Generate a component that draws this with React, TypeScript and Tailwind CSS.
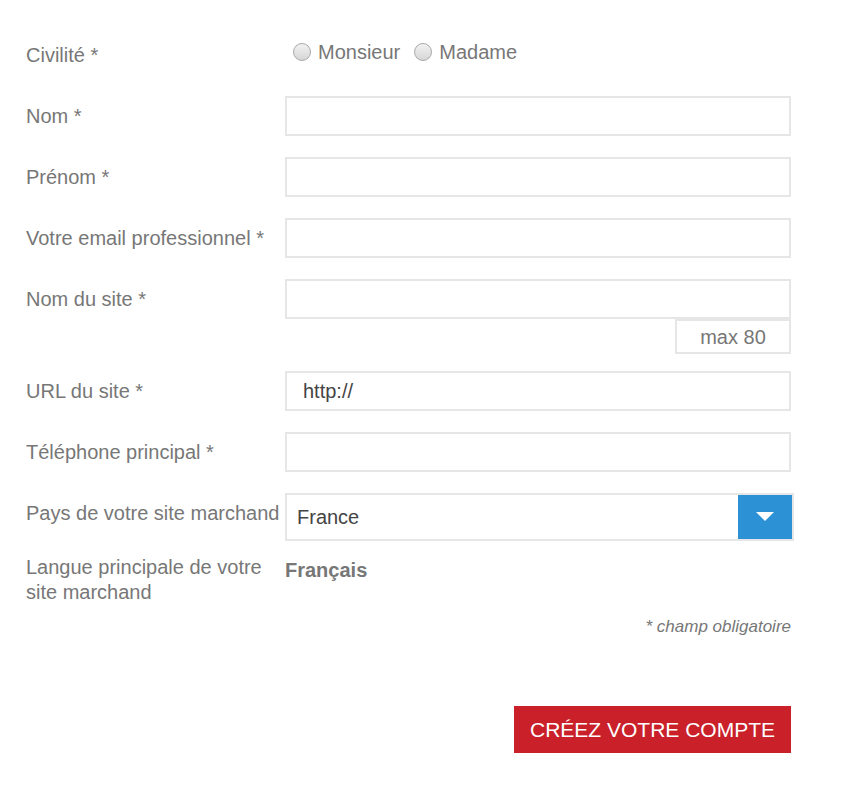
import React from "react";

const Label = ({ children, nowrap }: { children: React.ReactNode; nowrap?: boolean }) => (
  <div className={`w-[259px] shrink-0 h-[40px] flex items-center text-[20px] text-[#777777] ${nowrap ? "whitespace-nowrap" : ""}`}>
    {children}
  </div>
);

const Input = ({ value }: { value?: string }) => (
  <div className="w-[506px] h-[40px] border-2 border-[#e6e6e6] bg-white flex items-center pl-[16px] text-[20px] text-[#444444]">
    {value}
  </div>
);

const Radio = ({ label }: { label: string }) => (
  <div className="flex items-center">
    <span className="w-[18px] h-[18px] rounded-full border border-[#a9a9a9] bg-gradient-to-b from-[#f2f2f2] to-[#d6d6d6] mr-[7px]" />
    <span className="text-[20px] text-[#777777]">{label}</span>
  </div>
);

export default function App() {
  return (
    <div className="w-[842px] h-[797px] bg-white pl-[26px] pt-[35px]" style={{ fontFamily: '"Liberation Sans", Arial, sans-serif' }}>
      <div className="flex mb-[21px]">
        <Label>Civilité *</Label>
        <div className="flex items-start gap-[14px] pl-[8px] pt-[2px]">
          <Radio label="Monsieur" />
          <Radio label="Madame" />
        </div>
      </div>

      <div className="flex mb-[21px]">
        <Label>Nom *</Label>
        <Input />
      </div>
      <div className="flex mb-[21px]">
        <Label>Prénom *</Label>
        <Input />
      </div>
      <div className="flex mb-[21px]">
        <Label>Votre email professionnel *</Label>
        <Input />
      </div>
      <div className="flex mb-[17px]">
        <Label>Nom du site *</Label>
        <div className="flex flex-col w-[506px]">
          <Input />
          <div className="self-end w-[116px] h-[35px] border-2 border-[#e6e6e6] flex items-center justify-center text-[20px] text-[#777777]">
            max 80
          </div>
        </div>
      </div>
      <div className="flex mb-[21px]">
        <Label>URL du site *</Label>
        <Input value="http://" />
      </div>
      <div className="flex mb-[21px]">
        <Label>Téléphone principal *</Label>
        <Input />
      </div>
      <div className="flex mb-[13px]">
        <Label nowrap>Pays de votre site marchand</Label>
        <div className="w-[509px] h-[48px] border-2 border-[#e6e6e6] flex items-stretch bg-white">
          <div className="flex-1 flex items-center pl-[10px] text-[20px] text-[#444444]">France</div>
          <div className="w-[54px] bg-[#2d91d6] flex items-center justify-center">
            <svg width="18" height="10" viewBox="0 0 18 10">
              <polygon points="0,0 18,0 9,9" fill="#ffffff" />
            </svg>
          </div>
        </div>
      </div>
      <div className="flex mb-[12px]">
        <div className="w-[259px] shrink-0 text-[20px] leading-[25px] text-[#777777] pt-[1px]">
          Langue principale de votre site marchand
        </div>
        <div className="text-[20px] leading-[25px] font-bold text-[#777777] pt-[4px]">Français</div>
      </div>
      <div className="w-[765px] text-right text-[17px] leading-[20px] italic text-[#777777]">* champ obligatoire</div>

      <div className="w-[765px] flex justify-end mt-[69px]">
        <button className="h-[47px] px-[16px] bg-[#c9202a] text-white text-[21px] uppercase">
          CRÉEZ VOTRE COMPTE
        </button>
      </div>
    </div>
  );
}
